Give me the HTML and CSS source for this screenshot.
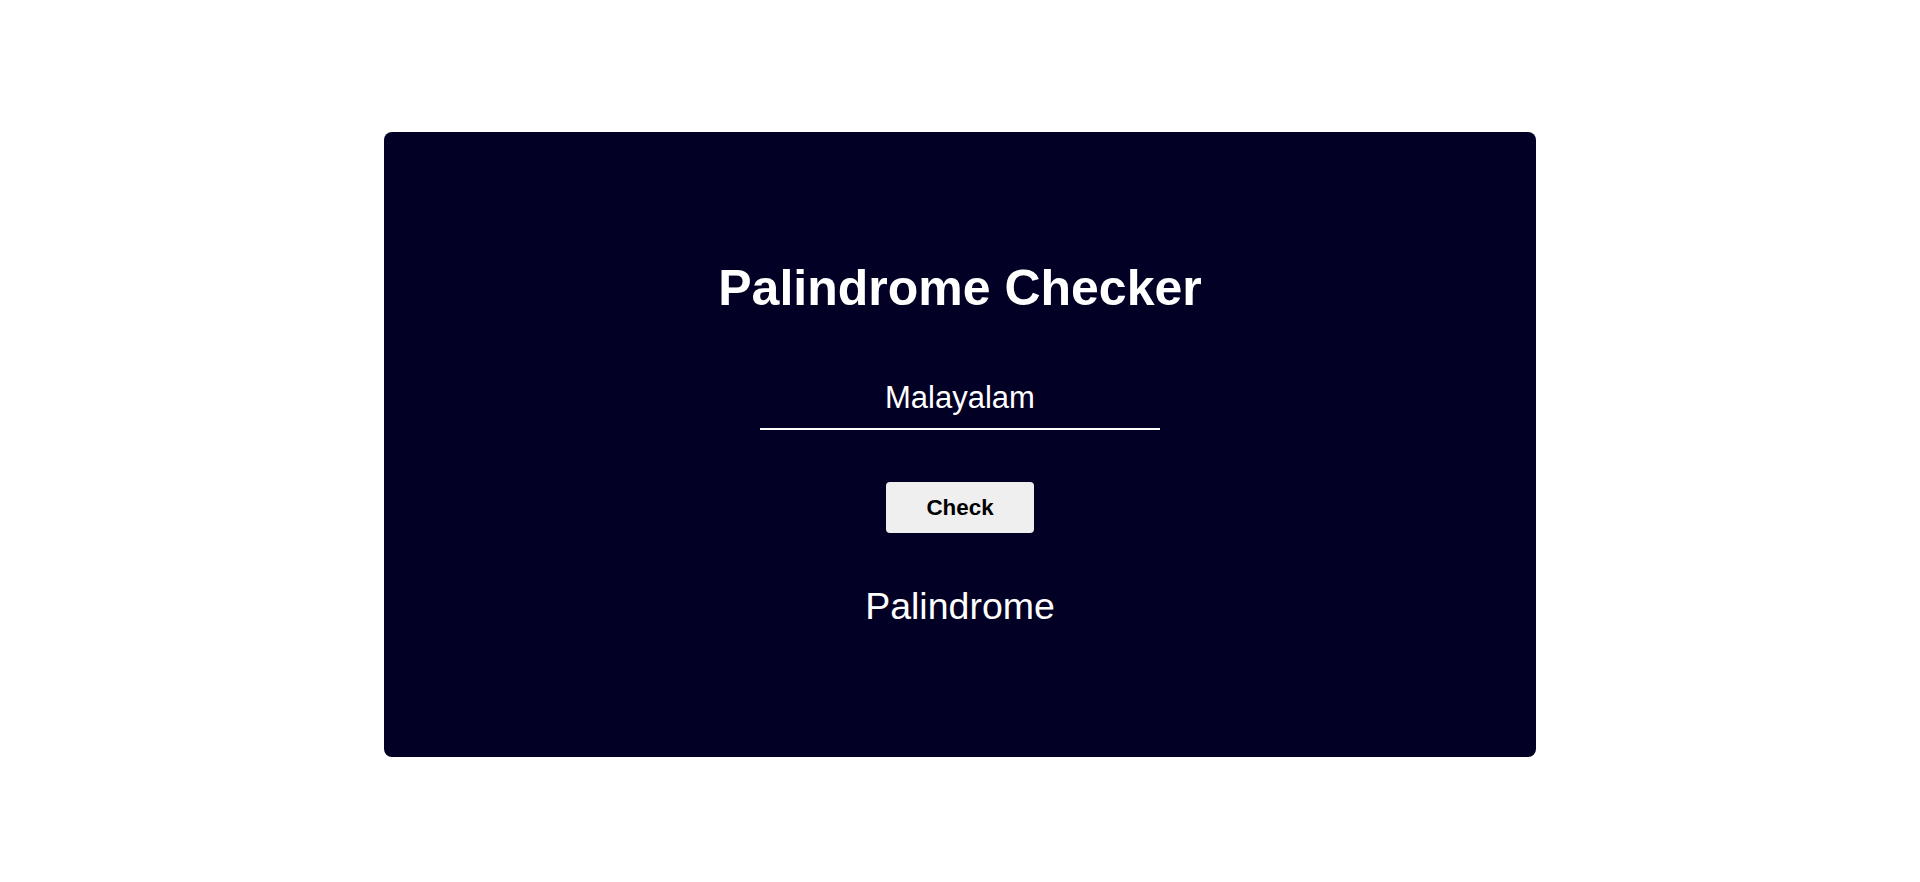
FILE: index.html
```html
<!DOCTYPE html>
<html lang="en">
<head>
<meta charset="utf-8">
<title>Palindrome Checker</title>
<link rel="stylesheet" href="styles.css">
</head>
<body>
  <main class="card">
    <h1 class="title">Palindrome Checker</h1>
    <input class="word-input" type="text" value="Malayalam">
    <button class="check-btn" type="button">Check</button>
    <p class="result">Palindrome</p>
  </main>
</body>
</html>
```

FILE: styles.css
```css
* { box-sizing: border-box; }

html, body {
  margin: 0;
  padding: 0;
  background: #ffffff;
}

body {
  font-family: "Liberation Sans", Arial, sans-serif;
  display: flex;
  justify-content: center;
  align-items: flex-start;
  padding-top: 132px;
  min-height: 882px;
}

.card {
  width: 1152px;
  height: 625px;
  background: #020024;
  border-radius: 8px;
  display: flex;
  flex-direction: column;
  align-items: center;
  justify-content: center;
  color: #ffffff;
}

.title {
  margin: 0;
  font-size: 50px;
  line-height: 1;
  font-weight: 700;
}

.word-input {
  margin-top: 64px;
  width: 400px;
  height: 53px;
  padding: 3px 0 12px;
  border: none;
  border-bottom: 2px solid #ffffff;
  background: transparent;
  color: #ffffff;
  font-family: "Liberation Sans", Arial, sans-serif;
  font-size: 31px;
  line-height: 36px;
  text-align: center;
  outline: none;
}

.check-btn {
  margin-top: 52px;
  width: 148px;
  height: 51px;
  border: none;
  border-radius: 4px;
  background: #efefef;
  color: #000000;
  font-family: "Liberation Sans", Arial, sans-serif;
  font-size: 22.4px;
  font-weight: 700;
  cursor: pointer;
}

.result {
  margin: 55px 0 0;
  font-size: 37.5px;
  line-height: 1;
}
```
